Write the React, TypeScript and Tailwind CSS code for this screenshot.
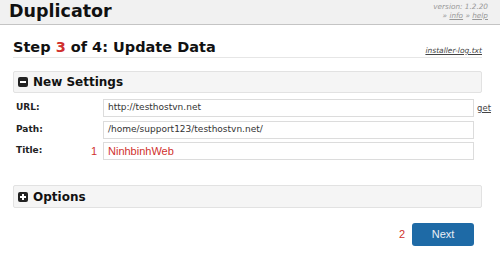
import React from "react";

const dv = { fontFamily: '"DejaVu Sans", Verdana, sans-serif' };
const ar = { fontFamily: '"Liberation Sans", Arial, sans-serif' };

function MinusIcon() {
  return (
    <svg width="10" height="10" viewBox="0 0 10 10" className="block shrink-0">
      <rect x="0" y="0" width="10" height="10" rx="2" fill="#222" />
      <rect x="2" y="4" width="6" height="2" fill="#fff" />
    </svg>
  );
}

function PlusIcon() {
  return (
    <svg width="10" height="10" viewBox="0 0 10 10" className="block shrink-0">
      <rect x="0" y="0" width="10" height="10" rx="2" fill="#222" />
      <rect x="2" y="4" width="6" height="2" fill="#fff" />
      <rect x="4" y="2" width="2" height="6" fill="#fff" />
    </svg>
  );
}

function Row({
  label,
  value,
  marker,
  red,
  extra,
}: {
  label: string;
  value: string;
  marker?: string;
  red?: boolean;
  extra?: React.ReactNode;
}) {
  return (
    <div className="flex items-center h-[18px]">
      <div className="w-[90px] shrink-0 pl-[3px] flex items-center justify-between pr-[6px]">
        <span className="text-[9px] font-bold text-[#222]" style={dv}>
          {label}
        </span>
        {marker && (
          <span className="text-[11px] text-[#d0312d]" style={ar}>
            {marker}
          </span>
        )}
      </div>
      <div className="w-[371px] shrink-0 h-[18px] border border-[#dcdcdc] bg-white flex items-center pl-[4px]">
        <span
          className={red ? "text-[11px] text-[#d0312d]" : "text-[9px] text-[#333]"}
          style={red ? ar : dv}
        >
          {value}
        </span>
      </div>
      {extra}
    </div>
  );
}

export default function App() {
  return (
    <div className="w-[500px] h-[259px] bg-white overflow-hidden relative">
      {/* header */}
      <div className="h-[25px] bg-[#f1f1f1] border-b border-[#c4c4c4] flex items-center justify-between pl-[9px] pr-[12px]">
        <span className="text-[17.5px] font-bold text-[#111] leading-none" style={dv}>
          Duplicator
        </span>
        <div className="flex flex-col items-end leading-none text-[7.3px] italic text-[#999] -mt-[2px]" style={dv}>
          <span>version: 1.2.20</span>
          <span className="mt-[2px]">
            » <span className="underline">info</span> » <span className="underline">help</span>
          </span>
        </div>
      </div>

      <div className="pl-[13px] w-[482px]">
        {/* step heading */}
        <div className="mt-[15px] h-[18px] border-b border-[#e6e6e6] flex items-start justify-between">
          <span className="text-[14.5px] font-bold text-[#111] leading-none" style={dv}>
            Step <span className="text-[#d0312d]">3</span> of 4: Update Data
          </span>
          <span className="text-[7.5px] italic underline text-[#444] mt-[5px]" style={dv}>
            installer-log.txt
          </span>
        </div>

        {/* New Settings */}
        <div className="mt-[13px] h-[22px] bg-[#f5f5f5] border border-[#e2e2e2] rounded-[2px] flex items-center pl-[4px] gap-[5px]">
          <MinusIcon />
          <span className="text-[12px] font-bold text-[#111]" style={dv}>
            New Settings
          </span>
        </div>

        <div className="mt-[6px] flex flex-col gap-[3.5px]">
          <Row
            label="URL:"
            value="http://testhostvn.net"
            extra={
              <span className="ml-[3px] shrink-0 text-[8.5px] underline text-[#444]" style={dv}>
                get
              </span>
            }
          />
          <Row label="Path:" value="/home/support123/testhostvn.net/" />
          <Row label="Title:" value="NinhbinhWeb" marker="1" red />
        </div>

        {/* Options */}
        <div className="mt-[25px] h-[23px] bg-[#f5f5f5] border border-[#e2e2e2] rounded-[2px] flex items-center pl-[4px] gap-[5px]">
          <PlusIcon />
          <span className="text-[12px] font-bold text-[#111]" style={dv}>
            Options
          </span>
        </div>

        {/* Next */}
        <div className="mt-[15px] flex items-center justify-end pr-[8px] gap-[7px]">
          <span className="text-[11px] text-[#d0312d]" style={ar}>
            2
          </span>
          <div className="w-[62px] h-[23px] bg-[#1e6aa6] rounded-[3px] flex items-center justify-center">
            <span className="text-[11px] text-[#e8eef5]" style={ar}>
              Next
            </span>
          </div>
        </div>
      </div>
    </div>
  );
}
